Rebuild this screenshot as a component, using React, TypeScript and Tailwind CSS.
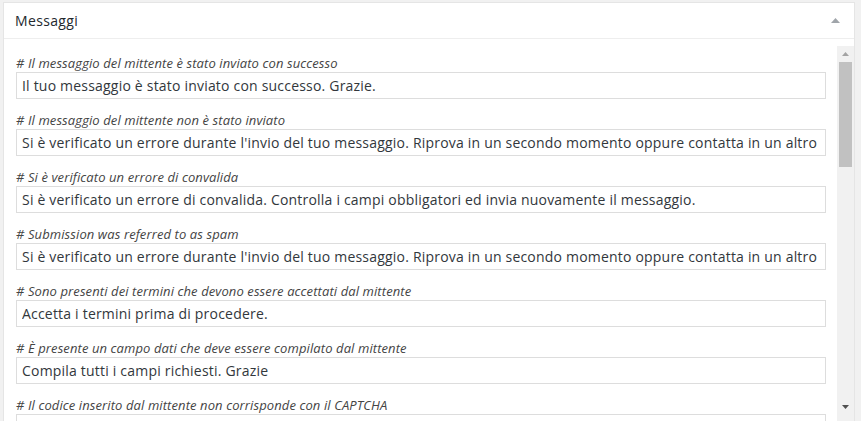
import React from 'react';

const fields = [
  {
    label: '# Il messaggio del mittente è stato inviato con successo',
    value: 'Il tuo messaggio è stato inviato con successo. Grazie.',
  },
  {
    label: '# Il messaggio del mittente non è stato inviato',
    value:
      "Si è verificato un errore durante l'invio del tuo messaggio. Riprova in un secondo momento oppure contatta in un altro modo.",
  },
  {
    label: '# Si è verificato un errore di convalida',
    value: 'Si è verificato un errore di convalida. Controlla i campi obbligatori ed invia nuovamente il messaggio.',
  },
  {
    label: '# Submission was referred to as spam',
    value:
      "Si è verificato un errore durante l'invio del tuo messaggio. Riprova in un secondo momento oppure contatta in un altro modo.",
  },
  {
    label: '# Sono presenti dei termini che devono essere accettati dal mittente',
    value: 'Accetta i termini prima di procedere.',
  },
  {
    label: '# È presente un campo dati che deve essere compilato dal mittente',
    value: 'Compila tutti i campi richiesti. Grazie',
  },
  {
    label: '# Il codice inserito dal mittente non corrisponde con il CAPTCHA',
    value: 'Il codice inserito non è corretto.',
  },
];

const App: React.FC = () => {
  return (
    <div className="h-[421px] w-[861px] overflow-hidden bg-[#f1f1f1] pl-[3px] pr-[6px] pt-[2px] font-['Open_Sans',sans-serif]">
      <div className="flex h-[440px] flex-col border border-[#e5e5e5] bg-white">
        <header className="flex h-[36px] shrink-0 items-center justify-between border-b border-[#eeeeee] pl-[11px] pr-[14px]">
          <h2 className="text-[14px] leading-none tracking-[0.35px] text-[#23282d]">Messaggi</h2>
          <svg width="9" height="5" viewBox="0 0 9 5">
            <path d="M0 5 L4.5 0 L9 5 Z" fill="#a0a5aa" />
          </svg>
        </header>

        <div className="flex min-h-0 flex-1 pt-[7px]">
          <div className="min-w-0 flex-1 pl-[12px] pr-[11px] pt-[9px]">
            {fields.map((f) => (
              <div key={f.label} className="mb-[13px]">
                <p className="text-[13px] italic leading-[17px] tracking-[0.1px] text-[#444]">{f.label}</p>
                <input
                  readOnly
                  defaultValue={f.value}
                  className="block h-[27px] w-full border border-[#dddddd] px-[5px] text-[14px] tracking-[0.2px] text-[#32373c] outline-none"
                />
              </div>
            ))}
          </div>

          <div className="flex w-[17px] shrink-0 flex-col bg-[#f1f1f1]">
            <div className="flex h-[16px] items-center justify-center">
              <svg width="7" height="4" viewBox="0 0 7 4">
                <path d="M0 4 L3.5 0 L7 4 Z" fill="#a3a3a3" />
              </svg>
            </div>
            <div className="mx-[2px] h-[105px] bg-[#c1c1c1]" />
            <div className="flex-1" />
            <div className="mb-[26px] flex h-[16px] items-center justify-center">
              <svg width="7" height="4" viewBox="0 0 7 4">
                <path d="M0 0 L3.5 4 L7 0 Z" fill="#505050" />
              </svg>
            </div>
          </div>
        </div>
      </div>
    </div>
  );
};

export default App;
